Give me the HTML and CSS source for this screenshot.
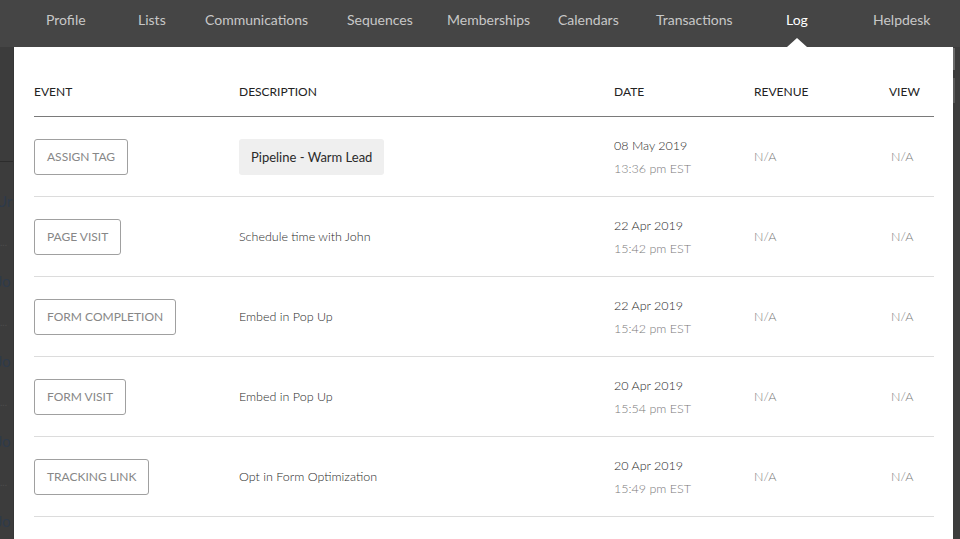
FILE: index.html
```html
<!DOCTYPE html>
<html lang="en">
<head>
<meta charset="utf-8">
<title>Contact Log</title>
<link rel="stylesheet" href="styles.css">
</head>
<body>
  <nav class="topnav">
    <a class="nav-item">Profile</a>
    <a class="nav-item">Lists</a>
    <a class="nav-item">Communications</a>
    <a class="nav-item">Sequences</a>
    <a class="nav-item">Memberships</a>
    <a class="nav-item">Calendars</a>
    <a class="nav-item">Transactions</a>
    <a class="nav-item active">Log</a>
    <a class="nav-item">Helpdesk</a>
  </nav>
  <div class="stage">
    <aside class="behind-left">
      <div class="behind-top"></div>
      <div class="behind-row"><span class="behind-name">Ur</span></div>
      <div class="behind-row"><span class="behind-dots">...</span><span class="behind-name">Jo</span></div>
      <div class="behind-row"><span class="behind-dots">...</span><span class="behind-name">Jo</span></div>
      <div class="behind-row"><span class="behind-dots">...</span><span class="behind-name">Jo</span></div>
      <div class="behind-row"><span class="behind-dots">...</span><span class="behind-name">Jo</span></div>
    </aside>
    <main class="panel">
      <div class="log-head">
        <div class="col-event">EVENT</div>
        <div class="col-desc">DESCRIPTION</div>
        <div class="col-date">DATE</div>
        <div class="col-rev">REVENUE</div>
        <div class="col-view">VIEW</div>
      </div>
      <div class="log-row">
        <div class="col-event"><span class="event-tag">ASSIGN TAG</span></div>
        <div class="col-desc"><span class="chip">Pipeline - Warm Lead</span></div>
        <div class="col-date"><div class="date-day">08 May 2019</div><div class="date-time">13:36 pm EST</div></div>
        <div class="col-rev na">N/A</div>
        <div class="col-view na">N/A</div>
      </div>
      <div class="log-row">
        <div class="col-event"><span class="event-tag">PAGE VISIT</span></div>
        <div class="col-desc desc-text">Schedule time with John</div>
        <div class="col-date"><div class="date-day">22 Apr 2019</div><div class="date-time">15:42 pm EST</div></div>
        <div class="col-rev na">N/A</div>
        <div class="col-view na">N/A</div>
      </div>
      <div class="log-row">
        <div class="col-event"><span class="event-tag">FORM COMPLETION</span></div>
        <div class="col-desc desc-text">Embed in Pop Up</div>
        <div class="col-date"><div class="date-day">22 Apr 2019</div><div class="date-time">15:42 pm EST</div></div>
        <div class="col-rev na">N/A</div>
        <div class="col-view na">N/A</div>
      </div>
      <div class="log-row">
        <div class="col-event"><span class="event-tag">FORM VISIT</span></div>
        <div class="col-desc desc-text">Embed in Pop Up</div>
        <div class="col-date"><div class="date-day">20 Apr 2019</div><div class="date-time">15:54 pm EST</div></div>
        <div class="col-rev na">N/A</div>
        <div class="col-view na">N/A</div>
      </div>
      <div class="log-row">
        <div class="col-event"><span class="event-tag">TRACKING LINK</span></div>
        <div class="col-desc desc-text">Opt in Form Optimization</div>
        <div class="col-date"><div class="date-day">20 Apr 2019</div><div class="date-time">15:49 pm EST</div></div>
        <div class="col-rev na">N/A</div>
        <div class="col-view na">N/A</div>
      </div>
      <div class="log-row">
        <div class="col-event"><span class="event-tag">PAGE VISIT</span></div>
        <div class="col-desc desc-text">Schedule time with John</div>
        <div class="col-date"><div class="date-day">19 Apr 2019</div><div class="date-time">10:12 pm EST</div></div>
        <div class="col-rev na">N/A</div>
        <div class="col-view na">N/A</div>
      </div>
    </main>
    <aside class="behind-right">
      <div class="scroll-thumb"></div>
      <div class="scroll-thumb second"></div>
    </aside>
  </div>
</body>
</html>
```

FILE: styles.css
```css
* { box-sizing: border-box; }

html, body {
  margin: 0;
  padding: 0;
  height: 100%;
  overflow: hidden;
}

body {
  background: #3e3e3e;
  font-family: Lato, "Open Sans", "Liberation Sans", sans-serif;
  color: #333;
}

.topnav {
  height: 47px;
  background: #454545;
  display: grid;
  grid-template-columns: 92px 67px 142px 100px 111px 98px 130px 87px auto;
  padding-left: 46px;
  align-items: start;
}

.nav-item {
  position: relative;
  height: 47px;
  line-height: 40px;
  font-size: 14px;
  color: #c8c8c8;
  white-space: nowrap;
  justify-self: start;
}

.nav-item.active {
  color: #ffffff;
}

.nav-item.active::after {
  content: "";
  position: absolute;
  left: 50%;
  bottom: 0;
  margin-left: -10px;
  width: 0;
  height: 0;
  border-left: 10px solid transparent;
  border-right: 10px solid transparent;
  border-bottom: 9px solid #ffffff;
}

.stage {
  display: flex;
  height: 492px;
}

.behind-left {
  width: 14px;
  flex: none;
  overflow: hidden;
  background: #3c3c3c;
  border-right: 1px solid #363636;
}

.behind-top {
  height: 115px;
  border-bottom: 1px solid #2c2c2c;
}

.behind-row {
  height: 80px;
  position: relative;
  overflow: hidden;
}

.behind-name {
  position: absolute;
  left: -4px;
  top: 30px;
  font-size: 15px;
  color: #2e3a4a;
  white-space: nowrap;
}

.behind-dots {
  position: absolute;
  left: 0;
  top: -6px;
  font-size: 10px;
  color: #4d4d4d;
}

.panel {
  flex: 1;
  background: #ffffff;
  padding: 0 19px 0 20px;
  overflow: hidden;
}

.behind-right {
  width: 7px;
  flex: none;
  background: #3c3c3c;
  padding-top: 1px;
}

.scroll-thumb {
  width: 2px;
  height: 22px;
  background: #6a6a6a;
}

.scroll-thumb.second {
  margin-top: 8px;
  height: 25px;
  background: #5a5a5a;
}

.log-head,
.log-row {
  display: grid;
  grid-template-columns: 205px 375px 140px 135px 1fr;
  align-items: center;
}

.log-head {
  padding-top: 38px;
  padding-bottom: 17px;
  border-bottom: 1px solid #7a7a7a;
  font-size: 12px;
  line-height: 14px;
  color: #222;
}

.log-row {
  height: 80px;
  border-bottom: 1px solid #dcdcdc;
}

.event-tag {
  display: inline-block;
  height: 36px;
  line-height: 34px;
  padding: 0 12px;
  border: 1px solid #a0a0a0;
  border-radius: 3px;
  font-size: 12px;
  color: #878787;
  white-space: nowrap;
}

.chip {
  display: inline-block;
  height: 36px;
  line-height: 36px;
  padding: 0 12px;
  background: #efefef;
  border-radius: 3px;
  font-size: 13px;
  color: #2a2a2a;
}

.desc-text {
  font-size: 12.5px;
  font-weight: 300;
  color: #2a2a2a;
}

.date-day {
  font-size: 12.5px;
  font-weight: 300;
  line-height: 23px;
  color: #2a2a2a;
}

.date-time {
  font-size: 12.5px;
  font-weight: 300;
  line-height: 23px;
  color: #7a7a7a;
}

.na {
  font-size: 12.5px;
  font-weight: 300;
  color: #7a7a7a;
}

.col-view.na {
  padding-left: 2px;
}
```
